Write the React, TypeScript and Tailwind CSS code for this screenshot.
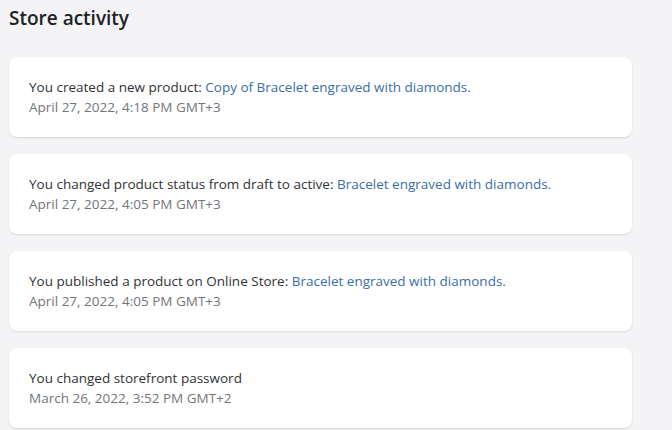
import React from 'react';

interface Activity {
  text: string;
  link?: string;
  date: string;
}

const activities: Activity[] = [
  { text: 'You created a new product: ', link: 'Copy of Bracelet engraved with diamonds.', date: 'April 27, 2022, 4:18 PM GMT+3' },
  { text: 'You changed product status from draft to active: ', link: 'Bracelet engraved with diamonds.', date: 'April 27, 2022, 4:05 PM GMT+3' },
  { text: 'You published a product on Online Store: ', link: 'Bracelet engraved with diamonds.', date: 'April 27, 2022, 4:05 PM GMT+3' },
  { text: 'You changed storefront password', date: 'March 26, 2022, 3:52 PM GMT+2' },
];

const App: React.FC = () => {
  return (
    <div className="w-[672px] h-[430px] overflow-hidden bg-[#f4f4f6] font-['Open_Sans',sans-serif]">
      <h1 className="pl-[9px] pt-[5px] text-[19px] leading-[26px] font-semibold text-[#202223]">Store activity</h1>
      <ul className="mt-[26px] ml-[9px] w-[623px] flex flex-col gap-[17px]">
        {activities.map((a, i) => (
          <li key={i} className="bg-white rounded-lg shadow-[0_1px_2px_rgba(0,0,0,0.12)] px-5 py-5 h-[80px]">
            <p className="text-[13.5px] leading-5 text-[#303236]">
              {a.text}
              {a.link && <span className="text-[#3a6ea8]">{a.link}</span>}
            </p>
            <p className="text-[13.5px] leading-5 text-[#72767a]">{a.date}</p>
          </li>
        ))}
      </ul>
    </div>
  );
};

export default App;
